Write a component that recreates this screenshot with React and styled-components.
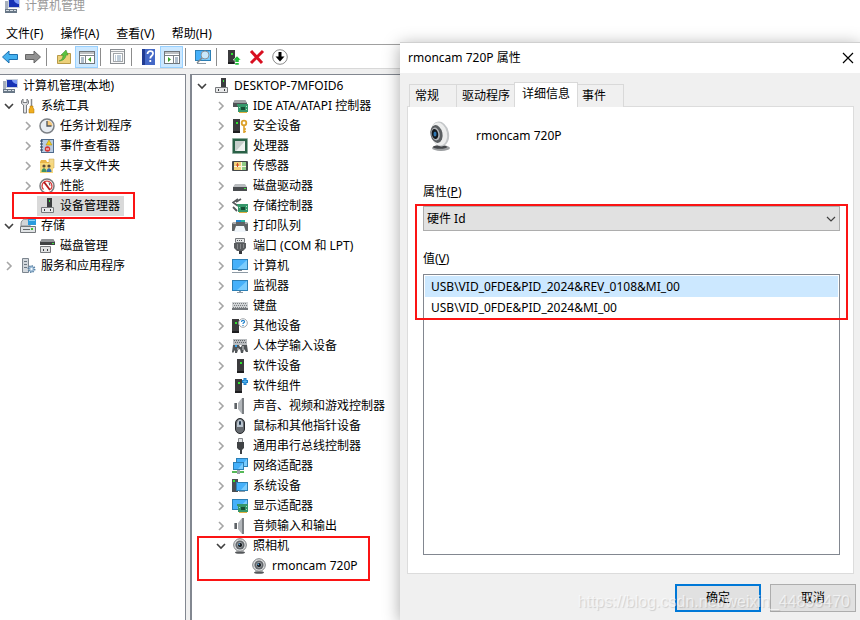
import React, { useState } from "react";
import styled, { createGlobalStyle } from "styled-components";

const GlobalStyle = createGlobalStyle`
  * {
    box-sizing: border-box;
  }
  body {
    margin: 0;
    background: #fff;
    overflow: hidden;
  }
  body, button, select {
    font-family: "Noto Sans", "Noto Sans CJK SC", sans-serif;
    font-size: 12px;
    line-height: 20px;
    color: #000;
  }
  button {
    margin: 0;
    padding: 0;
    border: 0;
    background: none;
  }
  ul {
    list-style: none;
    margin: 0;
    padding: 0;
  }
  svg {
    display: block;
    flex: none;
  }
`;

const Window = styled.div`
  position: relative;
  display: flex;
  flex-direction: column;
  height: 100vh;
  overflow: hidden;
`;

const TitleBar = styled.header`
  display: flex;
  align-items: flex-end;
  gap: 5px;
  height: 14px;
  padding-left: 4px;
  color: #999;
  line-height: 16px;
`;

const MenuBar = styled.nav`
  display: flex;
  gap: 17px;
  padding: 10px 6px 0;
`;

const ToolBar = styled.div`
  display: flex;
  align-items: flex-end;
  height: 25px;
  margin-left: -2px;
  border-top: 1px solid #a0a0a0;
  border-bottom: 1px solid #d8d8d8;
`;

const ToolButton = styled.button`
  display: flex;
  align-items: center;
  justify-content: center;
  width: 23px;
  height: 22px;
  border: 1px solid ${(props) => (props.$on ? "#99d1ff" : "transparent")};
  background: ${(props) => (props.$on ? "#cce8ff" : "none")};
`;

const Separator = styled.span`
  width: 1px;
  height: 18px;
  margin: 0 5px 2px 2px;
  background: #8c8c8c;
`;

const Body = styled.main`
  flex: 1;
  display: flex;
  gap: 4px;
  min-height: 0;
  padding-top: 5px;
  background: #f0f0f0;
`;

const SidePane = styled.section`
  width: 186px;
  padding-top: 1px;
  background: #fff;
  border-top: 1px solid #828790;
  border-right: 1px solid #828790;
`;

const MainPane = styled.section`
  flex: 1;
  padding: 1px 0 0 1px;
  background: #fff;
  border-top: 1px solid #828790;
  border-left: 2px solid #828790;
`;

const TreeGroup = styled.ul`
  position: relative;
`;

const Row = styled.li`
  position: relative;
  display: flex;
  align-items: center;
  height: 20px;
  padding-left: ${(props) => props.$indent}px;
  white-space: nowrap;
`;

const Toggle = styled.button`
  display: flex;
  align-items: center;
  justify-content: center;
  width: 18px;
  height: 20px;
`;

const NodeLabel = styled.span`
  display: flex;
  align-items: center;
  gap: 5px;
  height: 20px;
  padding: 0 4px 0 2px;
  background: ${(props) => (props.$selected ? "#d9d9d9" : "none")};
`;

/* red frame drawn round the parts of interest */
const Mark = styled.div`
  position: absolute;
  top: ${(props) => props.$top}px;
  left: ${(props) => props.$left}px;
  width: ${(props) => props.$width};
  height: ${(props) => props.$height}px;
  border: 2px solid #fb1414;
  pointer-events: none;
`;

const Dialog = styled.section`
  position: absolute;
  top: 42px;
  right: 0;
  bottom: 0;
  left: 400px;
  display: flex;
  flex-direction: column;
  background: #f0f0f0;
  border-top: 1px solid #d0d0d0;
  box-shadow: 0 3px 16px rgba(0, 0, 0, 0.35);
`;

const DialogTitle = styled.header`
  display: flex;
  align-items: center;
  justify-content: space-between;
  height: 30px;
  padding: 0 6px 0 8px;
  background: #fff;
`;

const TabList = styled.div`
  display: flex;
  align-items: flex-end;
  padding: 9px 9px 0;
`;

const Tab = styled.button`
  height: ${(props) => (props.$active ? 25 : 23)}px;
  min-width: 48px;
  margin: ${(props) => (props.$active ? "0 -1px 0 -2px" : "0 0 0 -1px")};
  padding: ${(props) => (props.$active ? "0 7px 3px" : "0 5px")};
  position: relative;
  z-index: ${(props) => (props.$active ? 1 : 0)};
  text-align: left;
  border: 1px solid #d9d9d9;
  border-bottom: 0;
  background: ${(props) => (props.$active ? "#fff" : "#f0f0f0")};

  &:first-child {
    margin-left: 0;
  }
`;

const TabPanel = styled.div`
  flex: 1;
  display: flex;
  flex-direction: column;
  margin: -1px 6px 0 7px;
  padding: 0 13px 18px 15px;
  background: #fff;
  border: 1px solid #dcdcdc;
`;

const DeviceHeader = styled.div`
  display: flex;
  align-items: center;
  gap: 24px;
  height: 58px;
  margin-bottom: 19px;
  padding-left: 5px;
`;

const FieldLabel = styled.label`
  line-height: 16px;
  margin-bottom: 6px;
`;

const Marked = styled.div`
  position: relative;
  flex: 1;
  display: flex;
  flex-direction: column;
`;

const SelectBox = styled.div`
  position: relative;
  margin-bottom: 20px;

  svg {
    position: absolute;
    top: 8px;
    right: 4px;
    pointer-events: none;
  }
`;

const Select = styled.select`
  display: block;
  width: 100%;
  height: 25px;
  padding: 0 3px;
  appearance: none;
  border: 1px solid #adadad;
  border-radius: 0;
  background: #e1e1e1;
`;

const ValueList = styled.ul`
  flex: 1;
  margin-top: 1px;
  padding: 1px;
  border: 1px solid #828790;
`;

const Value = styled.li`
  height: 21px;
  padding-left: 6px;
  line-height: 21px;
  background: ${(props) => (props.$selected ? "#cce8ff" : "none")};
`;

const Footer = styled.footer`
  display: flex;
  justify-content: flex-end;
  gap: 9px;
  padding: 10px 4px 8px;
`;

const PushButton = styled.button`
  width: 86px;
  height: 28px;
  background: #e1e1e1;
  border: ${(props) => (props.$primary ? "2px solid #0078d7" : "1px solid #adadad")};
`;

const Watermark = styled.span`
  position: absolute;
  right: 10px;
  bottom: 8px;
  font-family: "Liberation Sans", sans-serif;
  font-size: 16px;
  color: rgba(255, 255, 255, 0.6);
  text-shadow: 1px 1px 1px rgba(0, 0, 0, 0.14);
  pointer-events: none;
`;

const Tower = ({ x = 5 }) => (
  <>
    <rect x={x} y="1" width="7" height="14" fill="#3b3b3d" />
    <rect x={x} y="13" width="7" height="2" fill="#1d1d1f" />
    <rect x={x + 3} y="4" width="2" height="2" fill="#2fe32f" />
  </>
);

const Screen = ({ x = 0, y = 2, w = 16, h = 10 }) => (
  <>
    <rect x={x} y={y} width={w} height={h} fill="#2c7fb5" />
    <rect x={x + 1} y={y + 1} width={w - 2} height={h - 2} fill="#45b0fa" />
    <path d={`M${x + w - 1} ${y + 1}v${h - 2}h-${w - 6}z`} fill="#7accfd" />
  </>
);

const Card = () => (
  <>
    <path d="M5 6h11v8H6V8H5z" fill="#35976a" />
    <path d="M7 14h8v1H7z" fill="#e0b040" />
    <rect x="9" y="9" width="4" height="3" fill="#174f35" />
    <path d="M7 9h1v1H7zM14 8h1v1h-1zM14 11h1v1h-1z" fill="#a6e2bd" />
  </>
);

const Speaker = () => (
  <>
    <path d="M2 5h3v6H2z" fill="#5f6367" />
    <path d="M2 5h1v6H2z" fill="#9a9ea2" />
    <path d="M6 5l4-5v16l-4-5z" fill="#b2b6ba" />
    <path d="M10 0h2v16h-2z" fill="#7b7f83" />
  </>
);

const Webcam = () => (
  <>
    <ellipse cx="8" cy="14.5" rx="5" ry="1.3" fill="#55585b" />
    <circle cx="8" cy="7" r="6.300" fill="#dfe1e2" stroke="#7c7f82" />
    <circle cx="8" cy="7" r="4.600" fill="#63676b" />
    <circle cx="8" cy="7" r="2.600" fill="#15191d" stroke="#b4b9bd" strokeWidth="0.800" />
    <circle cx="7.300" cy="6.300" r="0.900" fill="#5ea7dd" />
  </>
);

const Usb = () => (
  <>
    <path d="M2.500 9.500h12v5h-12z" fill="#e8e9ea" stroke="#77797c" />
    <path d="M5 11h1v2H5zM11 11h1v2h-1z" fill="#3a3c3f" />
  </>
);

const icons = {
  computer: (
    <>
      <rect x="4" y="1" width="12" height="9" fill="#c9d1dc" />
      <rect x="5" y="2" width="10" height="7" fill="#1733b5" />
      <path d="M10 2h5v4c-2 0-5-2-5-4z" fill="#7d9cf6" />
      <rect x="1" y="3" width="3" height="8" fill="#a6afbb" />
      <path d="M1 11h12v4H1z" fill="#697887" />
      <path d="M2 12h3v1H2zM6 12h3v1H6zM10 12h2v1h-2z" fill="#d6dde4" />
    </>
  ),
  tools: (
    <>
      <path d="M3 1L1.500 3v2.500L3.500 7v8h3V7l2-1.500V3L7 1v3.500H3z" fill="#e1e2e4" stroke="#7b7e82" />
      <path d="M11.500 1v7" stroke="#85888c" strokeWidth="1.500" />
      <path d="M10 8h3v2l1 1v4H9v-4l1-1z" fill="#f0ae20" stroke="#ad7407" strokeWidth="0.500" />
    </>
  ),
  clock: (
    <>
      <circle cx="8" cy="8" r="7" fill="#e7ecf2" stroke="#7c8085" strokeWidth="1.500" />
      <path d="M8 8V2.500A5.500 5.500 0 0 1 13.500 8z" fill="#f7c97c" />
      <path d="M8 3v5h4.500" fill="none" stroke="#4c535c" strokeWidth="1.300" />
    </>
  ),
  events: (
    <>
      <rect x="2.500" y="1.500" width="12" height="13" fill="#b9cce2" stroke="#4f6b8c" />
      <path d="M1 3h3M1 6h3M1 9h3M1 12h3" stroke="#2d3e55" />
      <path d="M10 2l3 5H7z" fill="#f3cf1d" stroke="#a88408" strokeWidth="0.500" />
      <circle cx="8.500" cy="11" r="2.700" fill="#d73434" />
      <path d="M7 11h3" stroke="#fff" />
    </>
  ),
  shared: (
    <>
      <path d="M1 4l1-2h5l1 2h5v11H1z" fill="#e8b548" />
      <path d="M10 1h5v9h-5z" fill="#f4d989" stroke="#c79e3c" strokeWidth="0.500" />
      <path d="M1 5h13v10H1z" fill="#f7d87b" />
      <circle cx="5" cy="8" r="1.600" fill="#5b4a38" />
      <circle cx="10" cy="8" r="1.600" fill="#5b4a38" />
      <path d="M2.500 14c0-5 5-5 5 0z" fill="#3f9361" />
      <path d="M7.500 14c0-5 5-5 5 0z" fill="#3470b4" />
    </>
  ),
  perf: (
    <>
      <circle cx="8" cy="8" r="7" fill="#fff" stroke="#77797c" strokeWidth="1.500" />
      <path d="M4.500 11.500A5 5 0 0 1 8 3a5 5 0 0 1 3.500 8.500" fill="none" stroke="#d73a3a" strokeWidth="1.200" />
      <path d="M5 4l6 8" stroke="#b51c1c" strokeWidth="1.800" />
      <path d="M10 4.500l1 3" stroke="#444" />
    </>
  ),
  device: (
    <>
      <rect x="8" y="0" width="5" height="9" fill="#3b3d3f" />
      <rect x="10" y="2" width="1" height="2" fill="#3be33b" />
      <Usb />
    </>
  ),
  storage: (
    <>
      <path d="M1 6c0-6 7-6 9-2v4H1z" fill="#d2d5d8" stroke="#8a8f94" />
      <rect x="8" y="1" width="8" height="6" fill="#2a9bdc" />
      <path d="M9 2h6v1H9z" fill="#8bd0f5" />
      <path d="M0.500 8.500h15v6H.5z" fill="#e0e3e5" stroke="#74787c" />
      <path d="M3 11h7v1H3z" fill="#64686c" />
      <path d="M11 10h2v2h-2z" fill="#3fc32f" />
    </>
  ),
  disk: (
    <>
      <path d="M3 1h11l2 3v3H1V4z" fill="#3f4143" />
      <path d="M3 1h11l2 3H1z" fill="#8f9295" />
      <path d="M1.500 8.500h10v6h-10z" fill="#e2e3e4" stroke="#77797c" />
      <path d="M4 11h1v2H4zM8 11h1v2H8z" fill="#3a3c3f" />
      <path d="M13 5h2v1h-2z" fill="#3be33b" />
    </>
  ),
  services: (
    <>
      <path d="M2.500 0.500h6v14h-6z" fill="#d3d8dd" stroke="#7c858e" />
      <path d="M4 3.500h3M4 6.500h3M4 9.500h3" stroke="#6b7680" />
      <circle cx="11.500" cy="11" r="3" fill="#a9c6df" stroke="#5d84a6" strokeDasharray="1.3 1" strokeWidth="2" />
      <circle cx="11.500" cy="11" r="1" fill="#fff" />
    </>
  ),
  ide: (
    <>
      <path d="M3 2h10l2 3v4H1V5z" fill="#505356" />
      <path d="M3 2h10l2 3H1z" fill="#a1a4a7" />
      <Card />
    </>
  ),
  security: (
    <>
      <Tower x={1} />
      <circle cx="12" cy="5" r="2.300" fill="none" stroke="#dda12a" strokeWidth="1.800" />
      <path d="M12 7v8M12 11h2M12 13.500h2" stroke="#dda12a" strokeWidth="1.600" />
    </>
  ),
  cpu: (
    <>
      <rect x="0.500" y="0.500" width="15" height="15" fill="#2d6a4c" stroke="#86a797" strokeDasharray="1 1" />
      <rect x="1" y="1" width="14" height="14" fill="#2a6147" />
      <rect x="3" y="3" width="10" height="10" fill="#c6cecb" />
      <path d="M13 3v10H4z" fill="#eef1ef" />
    </>
  ),
  sensor: (
    <>
      <rect x="0" y="3" width="16" height="10" rx="1" fill="#45494a" />
      <rect x="2" y="4" width="7" height="8" fill="#f0d078" />
      <rect x="9" y="4" width="5" height="8" fill="#8fcb86" />
      <path d="M2 8.500h12M9.500 4v8" stroke="#f9f5e0" />
      <path d="M4 7h3M5.500 5v4" stroke="#d24c28" />
    </>
  ),
  drive: (
    <>
      <path d="M3 6h10l2 3H1z" fill="#b9bcbf" />
      <path d="M1 9h14v4H1z" fill="#4a4d50" />
      <path d="M12 10h2v1h-2z" fill="#3be33b" />
    </>
  ),
  storageCtl: (
    <>
      <path d="M6 1L1 4.500 6 8" fill="none" stroke="#56595c" strokeWidth="1.600" />
      <path d="M4 4l5-3M1 9l4 4" stroke="#56595c" strokeWidth="1.800" />
      <Card />
    </>
  ),
  printer: (
    <>
      <path d="M4 2h5v4H4z" fill="#2083d0" />
      <path d="M9 2h4v4H9z" fill="#28b3a0" />
      <path d="M1 4h14l1 2v7H0V6z" fill="#5f6366" />
      <path d="M1 4h3v2H1zM13 4h2v2h-2z" fill="#a9acaf" />
      <path d="M4 8h8l2 6H2z" fill="#f0f6fb" />
    </>
  ),
  port: (
    <>
      <path d="M3.500 0.500h9v4h-9z" fill="#e6e8e9" stroke="#777a7d" />
      <path d="M5 2h1v1H5zM7 2h1v1H7zM9 2h1v1H9z" fill="#55585b" />
      <path d="M2 5h12v5l-3 3H5l-3-3z" fill="#595c5f" />
      <path d="M5.500 6v5M8.500 6v5M11.500 6v4" stroke="#85888b" />
      <path d="M7 13h3v3H7z" fill="#35373a" />
    </>
  ),
  pc: (
    <>
      <Screen y={1} h={11} />
      <path d="M6 12h4v1H6z" fill="#7f8a94" />
      <path d="M0 14h16v1H0z" fill="#8d9aa5" />
    </>
  ),
  monitor: (
    <>
      <Screen h={11} />
      <path d="M7 13h2v1h2v1H5v-1h2z" fill="#8d9aa5" />
    </>
  ),
  keyboard: (
    <>
      <path d="M0 4h16v8H0z" fill="#73777b" />
      <path d="M0 4h16v6H0z" fill="#d0d3d5" />
      <path d="M1 5.500h14M2 7.500h13M1 9.500h14" stroke="#7a7e82" strokeDasharray="1 1" />
    </>
  ),
  other: (
    <>
      <Tower x={0} />
      <circle cx="11" cy="5" r="4.300" fill="#fff" stroke="#a3a7ab" />
      <path d="M9.500 4c0-2 3-2 3-.3 0 1.300-1.500 1-1.500 2.300M11 7v1" fill="none" stroke="#2383cc" strokeWidth="1.200" />
    </>
  ),
  hid: (
    <>
      <path d="M1 1h14v6H1z" fill="#b9bcbf" />
      <path d="M2 2.500h12M3 4.500h12" stroke="#62666a" strokeDasharray="1 1" />
      <path d="M0 14l1-7h6l1 2h1l1-2h5l1 7h-2l-2-3-1 4H9l-1-4-2 1-1 3H3v-3l-2 3z" fill="#515558" />
      <path d="M3 7h2v2H3z" fill="#3aa2e8" />
      <path d="M11 8v4M5 11h2" stroke="#d9dcde" />
    </>
  ),
  soft: <Tower />,
  component: (
    <>
      <Tower x={3} />
      <path d="M13 0v7M10 3.500h6" stroke="#1e7fc8" strokeWidth="3" />
      <path d="M13 1v5M11 3.500h4" stroke="#4fb1ee" />
    </>
  ),
  sound: <Speaker />,
  mouse: (
    <>
      <rect x="3.500" y="0.500" width="9" height="15" rx="4.500" fill="#666b70" stroke="#26292c" />
      <path d="M5 6c0-6 6-6 6 0v3H5z" fill="#b9c4ce" />
      <rect x="7" y="3" width="2" height="4" rx="1" fill="#24384c" />
    </>
  ),
  usb: (
    <>
      <path d="M6.500 0.500h4v4h-4z" fill="#e2e4e6" stroke="#85888b" />
      <path d="M5 4h7v6l-2 2H7l-2-2z" fill="#3f4245" />
      <path d="M8 12h1v4" fill="none" stroke="#3f4245" strokeWidth="2" />
    </>
  ),
  network: (
    <>
      <Screen x={4} y={0} w={12} h={9} />
      <Screen x={1} y={4} w={11} h={8} />
      <path d="M0 13h12v2H0z" fill="#56b958" />
      <path d="M5 12h3v4H5z" fill="#9ba3aa" />
    </>
  ),
  system: (
    <>
      <path d="M0 1h6v13H0z" fill="#4a4e52" />
      <path d="M1 2h2v2H1z" fill="#2fe32f" />
      <Screen x={4} y={4} w={12} h={9} />
      <path d="M7 13h6v1H7z" fill="#8d9aa5" />
    </>
  ),
  display: (
    <>
      <Screen y={1} h={11} />
      <Card />
    </>
  ),
  webcam: <Webcam />,
  back: <path d="M0.500 8L7 2v3.500h8.500v5H7V14z" fill="#45b2f0" stroke="#1c6fae" />,
  forward: <path d="M15.500 8L9 2v3.500H.5v5H9V14z" fill="#929292" stroke="#666" />,
  up: (
    <>
      <path d="M1.500 6.500h5l1-2h7v10h-13z" fill="#ecd07a" stroke="#b99a48" />
      <path d="M3 12c3-1 4-3 4-6H5l5-5 2 5h-2c0 3-3 6-7 6z" fill="#5cc240" stroke="#3b8a28" strokeWidth="0.500" />
    </>
  ),
  treeView: (
    <>
      <rect x="0.500" y="2.500" width="15" height="12" fill="#fff" stroke="#70757a" />
      <path d="M1 4h14M1 6.500h14M6.500 7v8" stroke="#7c8287" />
      <path d="M2 9h3M2 11h3M2 13h3" stroke="#607a96" />
      <path d="M12 8v5l-3-2.500z" fill="#39a329" />
    </>
  ),
  actionView: (
    <>
      <rect x="0.500" y="2.500" width="15" height="12" fill="#fff" stroke="#70757a" />
      <path d="M1 4h14M1 6.500h14M9.500 7v8" stroke="#7c8287" />
      <path d="M11 9h3M11 11h3M11 13h3" stroke="#607a96" />
      <path d="M4 8v5l3-2.500z" fill="#39a329" />
    </>
  ),
  props: (
    <>
      <rect x="0.500" y="0.500" width="14" height="14" fill="#f7f7f7" stroke="#898d91" />
      <path d="M1 2.500h13" stroke="#a7abaf" />
      <rect x="3.500" y="4.500" width="9" height="8" fill="#fff" stroke="#a3a7ab" />
      <path d="M5 7h1M7 7h4M5 9h1M7 9h4M5 11h1M7 11h4" stroke="#7f9bb5" />
    </>
  ),
  help: (
    <>
      <rect x="1" y="0" width="13" height="16" fill="#4468c6" />
      <rect x="1" y="0" width="3" height="16" fill="#213b91" />
      <path d="M6.500 5c0-4 5.500-3.500 5.500-.5 0 2.500-2.700 2-2.700 5M9.300 11v2" fill="none" stroke="#fff" strokeWidth="1.800" />
    </>
  ),
  scan: (
    <>
      <Screen y={1} h={11} />
      <path d="M2 14h9v1H2z" fill="#8d9aa5" />
      <circle cx="10" cy="6" r="4" fill="#c8e8fb" stroke="#8a9299" />
      <path d="M7 9l-5 5" stroke="#7f878d" strokeWidth="1.500" />
    </>
  ),
  update: (
    <>
      <Tower x={2} />
      <path d="M11 7l4 4h-2v5H9v-5H7z" fill="#20bd38" stroke="#fff" strokeWidth="0.500" />
      <path d="M9 13.500h4" stroke="#fff" />
    </>
  ),
  remove: <path d="M2 2l11 12M14 2L2 14" stroke="#d80f20" strokeWidth="3" />,
  down: (
    <>
      <circle cx="8" cy="8" r="7.300" fill="#fff" stroke="#8b8b8b" />
      <path d="M8 3v5" stroke="#000" strokeWidth="3" />
      <path d="M3.500 7.500h9L8 12.500z" fill="#000" />
    </>
  ),
};

function Icon({ name }) {
  return (
    <svg width="16" height="16" viewBox="0 0 16 16" aria-hidden="true">
      {icons[name]}
    </svg>
  );
}

function Chevron({ open }) {
  return (
    <svg width="10" height="10" viewBox="0 0 10 10" aria-hidden="true">
      <path
        d={open ? "M1 3l4 4 4-4" : "M3 1l4 4-4 4"}
        fill="none"
        stroke={open ? "#404040" : "#a6a6a6"}
        strokeWidth="1.600"
      />
    </svg>
  );
}

function TreeNode({ text, icon, indent = 0, toggle, selected, children }) {
  return (
    <Row $indent={indent}>
      {toggle && (
        <Toggle aria-label={text}>
          <Chevron open={toggle === "open"} />
        </Toggle>
      )}
      <NodeLabel $selected={selected}>
        <Icon name={icon} />
        {text}
      </NodeLabel>
      {children}
    </Row>
  );
}

const devices = [
  ["IDE ATA/ATAPI 控制器", "ide"],
  ["安全设备", "security"],
  ["处理器", "cpu"],
  ["传感器", "sensor"],
  ["磁盘驱动器", "drive"],
  ["存储控制器", "storageCtl"],
  ["打印队列", "printer"],
  ["端口 (COM 和 LPT)", "port"],
  ["计算机", "pc"],
  ["监视器", "monitor"],
  ["键盘", "keyboard"],
  ["其他设备", "other"],
  ["人体学输入设备", "hid"],
  ["软件设备", "soft"],
  ["软件组件", "component"],
  ["声音、视频和游戏控制器", "sound"],
  ["鼠标和其他指针设备", "mouse"],
  ["通用串行总线控制器", "usb"],
  ["网络适配器", "network"],
  ["系统设备", "system"],
  ["显示适配器", "display"],
  ["音频输入和输出", "sound"],
];

const tools = [
  ["back", "后退"],
  ["forward", "前进"],
  null,
  ["up", "向上"],
  ["treeView", "控制台树", true],
  null,
  ["props", "属性"],
  null,
  ["help", "帮助"],
  ["actionView", "操作窗格", true],
  null,
  ["scan", "扫描"],
  null,
  ["update", "更新"],
  ["remove", "卸载"],
  ["down", "禁用"],
];

const menus = ["文件(F)", "操作(A)", "查看(V)", "帮助(H)"];
const tabs = ["常规", "驱动程序", "详细信息", "事件"];
const values = [
  "USB\\VID_0FDE&PID_2024&REV_0108&MI_00",
  "USB\\VID_0FDE&PID_2024&MI_00",
];

function ConsoleTree() {
  return (
    <SidePane>
      <TreeGroup>
        <TreeNode text="计算机管理(本地)" icon="computer" />
        <TreeNode text="系统工具" icon="tools" toggle="open" />
        <TreeNode text="任务计划程序" icon="clock" indent={19} toggle="closed" />
        <TreeNode text="事件查看器" icon="events" indent={19} toggle="closed" />
        <TreeNode text="共享文件夹" icon="shared" indent={19} toggle="closed" />
        <TreeNode text="性能" icon="perf" indent={19} toggle="closed" />
        <TreeNode text="设备管理器" icon="device" indent={37} selected>
          <Mark $top={-4} $left={12} $width="123px" $height={27} />
        </TreeNode>
        <TreeNode text="存储" icon="storage" toggle="open" />
        <TreeNode text="磁盘管理" icon="disk" indent={37} />
        <TreeNode text="服务和应用程序" icon="services" toggle="closed" />
      </TreeGroup>
    </SidePane>
  );
}

function DeviceTree() {
  return (
    <MainPane>
      <TreeGroup>
        <TreeNode text="DESKTOP-7MFOID6" icon="device" toggle="open" />
        {devices.map(([text, icon]) => (
          <TreeNode key={text} text={text} icon={icon} indent={19} toggle="closed" />
        ))}
      </TreeGroup>
      <TreeGroup>
        <TreeNode text="照相机" icon="webcam" indent={19} toggle="open" />
        <TreeNode text="rmoncam 720P" icon="webcam" indent={56} />
        <Mark $top={0} $left={4} $width="173px" $height={45} />
      </TreeGroup>
    </MainPane>
  );
}

function CameraPicture() {
  return (
    <svg width="24" height="32" viewBox="0 0 24 32" aria-hidden="true">
      <ellipse cx="13" cy="28" rx="9" ry="3" fill="#9b9ea0" />
      <ellipse cx="12" cy="27" rx="7" ry="1.800" fill="#45484b" />
      <ellipse cx="12" cy="14" rx="9" ry="12.500" fill="#c4c7c9" transform="rotate(-12 12 14)" />
      <ellipse cx="11" cy="14" rx="8" ry="11.500" fill="#eceded" transform="rotate(-12 11 14)" />
      <ellipse cx="8.500" cy="14" rx="6" ry="9" fill="#5a5e61" transform="rotate(-12 8.500 14)" />
      <ellipse cx="7.500" cy="14" rx="4.200" ry="6.500" fill="#b4b7ba" transform="rotate(-12 7.500 14)" />
      <ellipse cx="7" cy="14" rx="3.200" ry="5" fill="#14181c" transform="rotate(-12 7 14)" />
      <ellipse cx="7" cy="14" rx="1.500" ry="2.500" fill="#2f78b4" />
    </svg>
  );
}

function PropertiesDialog() {
  const [tab, setTab] = useState("详细信息");
  const [value, setValue] = useState(values[0]);

  return (
    <Dialog role="dialog" aria-label="rmoncam 720P 属性">
      <DialogTitle>
        rmoncam 720P 属性
        <button aria-label="关闭">
          <svg width="12" height="12" viewBox="0 0 12 12">
            <path d="M1 1l10 10M11 1L1 11" stroke="#000" strokeWidth="1.200" />
          </svg>
        </button>
      </DialogTitle>
      <TabList role="tablist">
        {tabs.map((name) => (
          <Tab
            key={name}
            role="tab"
            aria-selected={name === tab}
            $active={name === tab}
            onClick={() => setTab(name)}
          >
            {name}
          </Tab>
        ))}
      </TabList>
      <TabPanel role="tabpanel">
        <DeviceHeader>
          <CameraPicture />
          rmoncam 720P
        </DeviceHeader>
        <FieldLabel htmlFor="property">
          属性(<u>P</u>)
        </FieldLabel>
        <Marked>
          <SelectBox>
            <Select id="property" defaultValue="hwid">
              <option value="hwid">硬件 Id</option>
            </Select>
            <svg width="10" height="10" viewBox="0 0 10 10" aria-hidden="true">
              <path d="M1 3l4 4 4-4" fill="none" stroke="#404040" strokeWidth="1.200" />
            </svg>
          </SelectBox>
          <FieldLabel as="span" id="value-label">
            值(<u>V</u>)
          </FieldLabel>
          <ValueList role="listbox" aria-labelledby="value-label">
            {values.map((v) => (
              <Value
                key={v}
                role="option"
                aria-selected={v === value}
                $selected={v === value}
                onClick={() => setValue(v)}
              >
                {v}
              </Value>
            ))}
          </ValueList>
          <Mark $top={-2} $left={-8} $width="calc(100% + 16px)" $height={116} />
        </Marked>
      </TabPanel>
      <Footer>
        <PushButton $primary>确定</PushButton>
        <PushButton>取消</PushButton>
      </Footer>
      <Watermark>https://blog.csdn.net/weixin_44899470</Watermark>
    </Dialog>
  );
}

export default function App() {
  return (
    <Window>
      <GlobalStyle />
      <TitleBar>
        <Icon name="computer" />
        <span>计算机管理</span>
      </TitleBar>
      <MenuBar>
        {menus.map((m) => (
          <button key={m}>{m}</button>
        ))}
      </MenuBar>
      <ToolBar>
        {tools.map((tool, i) =>
          tool ? (
            <ToolButton key={i} aria-label={tool[1]} $on={tool[2]}>
              <Icon name={tool[0]} />
            </ToolButton>
          ) : (
            <Separator key={i} />
          )
        )}
      </ToolBar>
      <Body>
        <ConsoleTree />
        <DeviceTree />
      </Body>
      <PropertiesDialog />
    </Window>
  );
}
